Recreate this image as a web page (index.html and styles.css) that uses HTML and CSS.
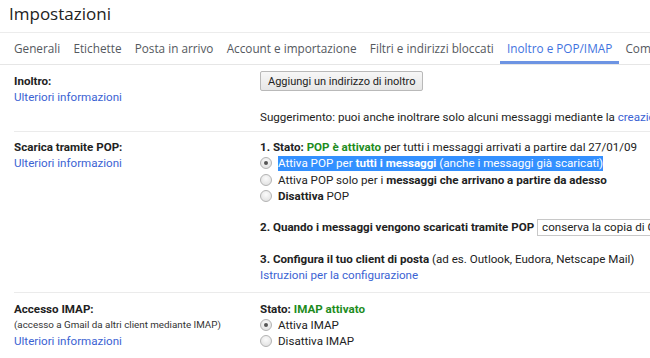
FILE: index.html
```html
<!DOCTYPE html>
<html lang="it">
<head>
<meta charset="utf-8">
<title>Impostazioni</title>
<link rel="stylesheet" href="styles.css">
</head>
<body>
<header class="title">Impostazioni</header>
<nav class="tabs">
  <a class="tab">Generali</a>
  <a class="tab">Etichette</a>
  <a class="tab">Posta in arrivo</a>
  <a class="tab">Account e importazione</a>
  <a class="tab">Filtri e indirizzi bloccati</a>
  <a class="tab active">Inoltro e POP/IMAP</a>
  <a class="tab">Componenti aggiuntivi</a>
</nav>
<main class="settings">
  <section class="row row-fwd">
    <div class="label">
      <div class="line"><b>Inoltro:</b></div>
      <div class="line"><a class="link">Ulteriori informazioni</a></div>
    </div>
    <div class="body">
      <button class="btn">Aggiungi un indirizzo di inoltro</button>
      <div class="line hint">Suggerimento: puoi anche inoltrare solo alcuni messaggi mediante la <a class="link">creazione di un filtro!</a></div>
    </div>
  </section>

  <section class="row row-pop">
    <div class="label">
      <div class="line"><b>Scarica tramite POP:</b></div>
      <div class="line"><a class="link">Ulteriori informazioni</a></div>
    </div>
    <div class="body">
      <div class="line"><b>1. Stato: <span class="ok">POP è attivato</span></b> per tutti i messaggi arrivati a partire dal 27/01/09</div>
      <div class="line opt"><span class="radio checked"></span><span class="sel">Attiva POP per <b>tutti i messaggi</b> (anche i messaggi già scaricati)</span></div>
      <div class="line opt"><span class="radio"></span><span>Attiva POP solo per i <b>messaggi che arrivano a partire da adesso</b></span></div>
      <div class="line opt"><span class="radio"></span><span><b>Disattiva</b> POP</span></div>
      <div class="line gap"><b>2. Quando i messaggi vengono scaricati tramite POP</b> <span class="select">conserva la copia di Gmail nella Posta in arrivo</span></div>
      <div class="line gap"><b>3. Configura il tuo client di posta</b> (ad es. Outlook, Eudora, Netscape Mail)</div>
      <div class="line"><a class="link">Istruzioni per la configurazione</a></div>
    </div>
  </section>

  <section class="row row-imap">
    <div class="label">
      <div class="line"><b>Accesso IMAP:</b></div>
      <div class="line small">(accesso a Gmail da altri client mediante IMAP)</div>
      <div class="line"><a class="link">Ulteriori informazioni</a></div>
    </div>
    <div class="body">
      <div class="line"><b>Stato: <span class="ok">IMAP attivato</span></b></div>
      <div class="line opt"><span class="radio checked"></span><span>Attiva IMAP</span></div>
      <div class="line opt"><span class="radio"></span><span>Disattiva IMAP</span></div>
    </div>
  </section>
</main>
</body>
</html>
```

FILE: styles.css
```css
html, body {
  margin: 0;
  padding: 0;
  background: #fff;
  overflow: hidden;
}
body {
  width: 650px;
  height: 358px;
  font-family: Roboto, "Liberation Sans", Arial, sans-serif;
  font-size: 11.6px;
  color: #222;
}

.title {
  font-family: "Open Sans", Roboto, sans-serif;
  font-size: 17px;
  font-weight: 400;
  color: #222;
  line-height: 28px;
  height: 28px;
  padding: 0 0 4px 9px;
  border-bottom: 1px solid #ececec;
}

.tabs {
  display: flex;
  white-space: nowrap;
  padding-left: 7.4px;
  border-bottom: 1px solid #e6e6e6;
  height: 31px;
  overflow: hidden;
}
.tab {
  font-family: "Open Sans", Roboto, sans-serif;
  font-size: 11.75px;
  font-weight: 400;
  color: #55595e;
  line-height: 25.5px;
  padding: 2.5px 6.6px 0;
  border-bottom: 3px solid transparent;
  flex: none;
}
.tab.active {
  color: #3f73e0;
  border-bottom-color: #6d94e3;
}

.row {
  display: flex;
  margin-left: 14px;
  border-top: 1px solid #ebebeb;
  white-space: nowrap;
}
.row-fwd {
  border-top: none;
  padding: 8px 0 6.2px;
}
.row-pop {
  padding: 7px 0 8.2px;
}
.row-imap {
  padding: 8px 0 0;
}
.label {
  width: 246px;
  flex: none;
}
.body {
  flex: 1;
  min-width: 0;
}
.line {
  line-height: 16.3px;
  height: 16.3px;
}
.small {
  font-size: 9.8px;
  color: #333;
}
b {
  font-weight: 700;
}
.link {
  color: #3b63d3;
}
.ok {
  color: #1e8c1e;
}

.btn {
  display: block;
  margin-top: -2px;
  font-family: Roboto, "Liberation Sans", Arial, sans-serif;
  font-size: 11px;
  color: #222;
  height: 20px;
  padding: 0 7px;
  border: 1px solid #b9b9b9;
  border-radius: 2px;
  background: linear-gradient(#f7f7f7, #e6e6e6);
}
.hint {
  margin-top: 17.5px;
}

.opt {
  display: flex;
  align-items: center;
}
.radio {
  width: 10px;
  height: 10px;
  margin-right: 6px;
  border: 1px solid #b3b3b3;
  border-radius: 50%;
  background: radial-gradient(circle at 50% 35%, #fbfbfb, #dcdcdc);
  position: relative;
  flex: none;
}
.radio.checked::after {
  content: "";
  position: absolute;
  left: 3px;
  top: 3px;
  width: 4px;
  height: 4px;
  border-radius: 50%;
  background: #555;
}
.sel {
  background: #3390ff;
  color: #fff;
  line-height: 15px;
}
.gap {
  margin-top: 15.2px;
}
.select {
  display: inline-block;
  vertical-align: top;
  height: 15px;
  line-height: 15px;
  margin-bottom: -1px;
  padding: 0 4px;
  border: 1px solid #c8c8c8;
  color: #222;
}
```
